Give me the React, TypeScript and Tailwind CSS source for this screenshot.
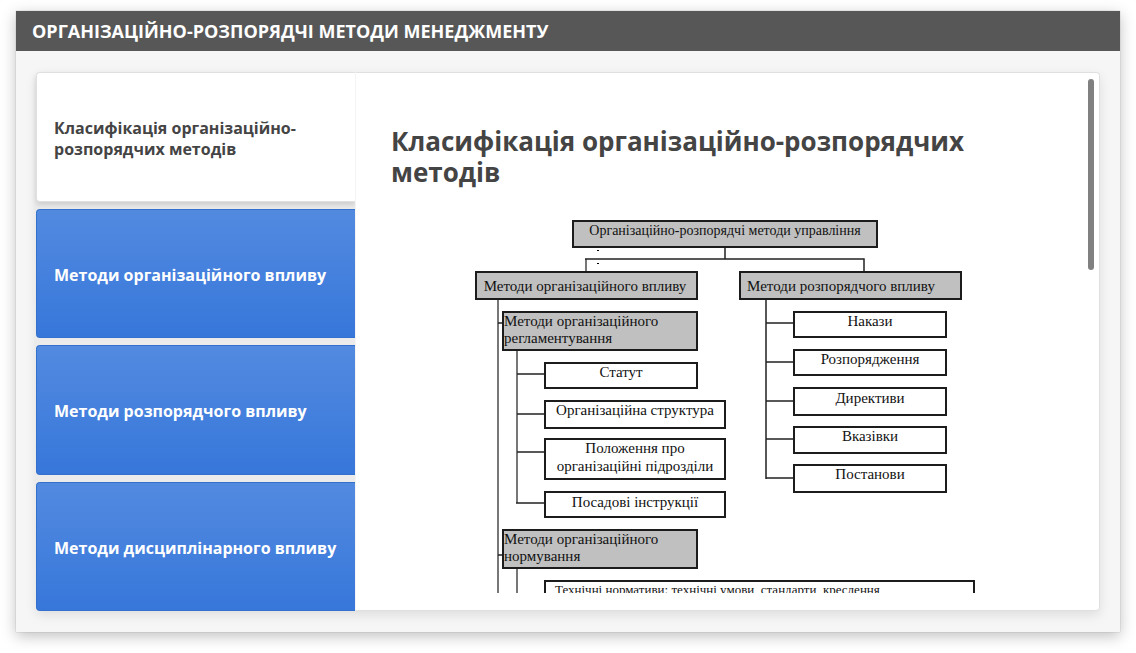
import { useState } from 'react';

const tabs = [
  'Класифікація організаційно-розпорядчих методів',
  'Методи організаційного впливу',
  'Методи розпорядчого впливу',
  'Методи дисциплінарного впливу',
];

type Line = { x: number; y: number; t: string; start?: boolean };
type Box = { x: number; y: number; w: number; h: number; grey?: boolean; size?: number; lines: Line[] };

const boxes: Box[] = [
  { x: 182, y: 11, w: 304, h: 26, grey: true, size: 14, lines: [{ x: 334, y: 25, t: 'Організаційно-розпорядчі методи управління' }] },
  { x: 85, y: 62, w: 221, h: 27, grey: true, lines: [{ x: 194, y: 81, t: 'Методи організаційного впливу' }] },
  { x: 349, y: 62, w: 221, h: 27, grey: true, lines: [{ x: 450, y: 81, t: 'Методи розпорядчого впливу' }] },
  {
    x: 112, y: 102, w: 194, h: 38, grey: true,
    lines: [
      { x: 113, y: 116, t: 'Методи організаційного', start: true },
      { x: 113, y: 133, t: 'регламентування', start: true },
    ],
  },
  { x: 154, y: 153, w: 152, h: 25, lines: [{ x: 230, y: 167, t: 'Статут' }] },
  { x: 154, y: 191, w: 180, h: 27, lines: [{ x: 244, y: 205, t: 'Організаційна структура' }] },
  {
    x: 154, y: 229, w: 180, h: 40,
    lines: [
      { x: 244, y: 243, t: 'Положення про' },
      { x: 244, y: 261, t: 'організаційні підрозділи' },
    ],
  },
  { x: 154, y: 282, w: 180, h: 25, lines: [{ x: 244, y: 297, t: 'Посадові інструкції' }] },
  {
    x: 112, y: 320, w: 194, h: 38, grey: true,
    lines: [
      { x: 113, y: 334, t: 'Методи організаційного', start: true },
      { x: 113, y: 351, t: 'нормування', start: true },
    ],
  },
  { x: 154, y: 371, w: 429, h: 26, size: 13, lines: [{ x: 164, y: 384, t: 'Технічні нормативи: технічні умови, стандарти, креслення', start: true }] },
  { x: 403, y: 102, w: 152, h: 25, lines: [{ x: 479, y: 116, t: 'Накази' }] },
  { x: 403, y: 140, w: 152, h: 25, lines: [{ x: 479, y: 154, t: 'Розпорядження' }] },
  { x: 403, y: 178, w: 152, h: 27, lines: [{ x: 479, y: 193, t: 'Директиви' }] },
  { x: 403, y: 217, w: 152, h: 26, lines: [{ x: 479, y: 231, t: 'Вказівки' }] },
  { x: 403, y: 255, w: 152, h: 27, lines: [{ x: 479, y: 269, t: 'Постанови' }] },
];

function Diagram() {
  return (
    <svg
      className="block h-[400px] w-[604px] max-w-none font-['Liberation_Serif',serif]"
      viewBox="0 0 604 400"
      role="img"
      aria-label="Організаційно-розпорядчі методи управління"
    >
      <g fill="none" stroke="#777777" strokeWidth="2">
        <path d="M107 89V400M126 140V293M126 358V400M195 49V62" />
      </g>
      <g fill="none" stroke="#222222" strokeWidth="1.5">
        <path d="M334 37V49M194 49H473V62M375 89V269" />
        <path d="M107 113H112M107 345H112M126 164H154M126 204H154M126 242H154M125 293H154" />
        <path d="M375 113H403M375 152H403M375 191H403M375 229H403M375 268H403" />
      </g>
      <path d="M206 40h2v1h-2zM206 53h2v1h-2z" fill="#000000" />
      {boxes.map((b) => (
        <g key={`${b.x}-${b.y}`}>
          <rect x={b.x} y={b.y} width={b.w} height={b.h} fill={b.grey ? '#c0c0c0' : '#ffffff'} stroke="#1c1c1c" strokeWidth="2" />
          {b.lines.map((l) => (
            <text key={l.y} x={l.x} y={l.y} fontSize={b.size ?? 15} textAnchor={l.start ? 'start' : 'middle'} fill="#111111">
              {l.t}
            </text>
          ))}
        </g>
      ))}
    </svg>
  );
}

export default function App() {
  const [active, setActive] = useState(0);
  return (
    <div className="flex h-screen flex-col bg-white px-4 pt-[11px] pb-[21px] font-['Open_Sans','Noto_Sans',sans-serif]">
      <main className="flex min-h-0 flex-1 flex-col bg-[#f6f6f6] shadow-[0_0_1px_rgba(0,0,0,0.3),0_4px_14px_rgba(0,0,0,0.25)]">
        <header className="flex h-10 shrink-0 items-center bg-[#575757] px-4">
          <h1 className="text-lg font-bold text-white">ОРГАНІЗАЦІЙНО-РОЗПОРЯДЧІ МЕТОДИ МЕНЕДЖМЕНТУ</h1>
        </header>
        <div className="flex min-h-0 flex-1 px-5 py-[21px]">
          <div className="flex min-h-0 flex-1 rounded bg-[#ebebeb] shadow-[0_4px_12px_rgba(0,0,0,0.1)]">
            <nav className="flex w-[319px] shrink-0 flex-col gap-[7px]" role="tablist" aria-orientation="vertical">
              {tabs.map((tab, i) => (
                <button
                  key={tab}
                  type="button"
                  role="tab"
                  aria-selected={active === i}
                  onClick={() => setActive(i)}
                  className={
                    active === i
                      ? 'min-h-0 flex-1 rounded-l border border-r-0 border-[#e0e0e0] bg-white pt-1 pr-4 pl-[17px] text-left text-base leading-[21px] font-bold text-[#444444] shadow-[0_3px_5px_rgba(0,0,0,0.12)]'
                      : 'min-h-0 flex-1 rounded-l border border-r-0 border-[#3371cc] bg-linear-to-b from-[#528ae0] to-[#3777da] pt-1 pr-4 pl-[17px] text-left text-base leading-[21px] font-bold text-white'
                  }
                >
                  {tab}
                </button>
              ))}
            </nav>
            <section className="relative flex min-w-0 flex-1 flex-col rounded-r border border-[#e0e0e0] border-l-[#f4f4f4] bg-white pb-[17px]" role="tabpanel" aria-label={tabs[0]}>
              <div className="min-h-0 flex-1 overflow-auto pr-24 pl-[35px] [scrollbar-width:none]">
                <h2 className="pt-[53px] text-[26px] leading-[31px] font-bold text-[#444444]">{tabs[0]}</h2>
                <div className="pt-[22px]">
                  <Diagram />
                </div>
              </div>
              <div className="absolute top-1.5 right-[5px] h-[191px] w-1.5 rounded-full bg-[#808080]" />
            </section>
          </div>
        </div>
      </main>
    </div>
  );
}
